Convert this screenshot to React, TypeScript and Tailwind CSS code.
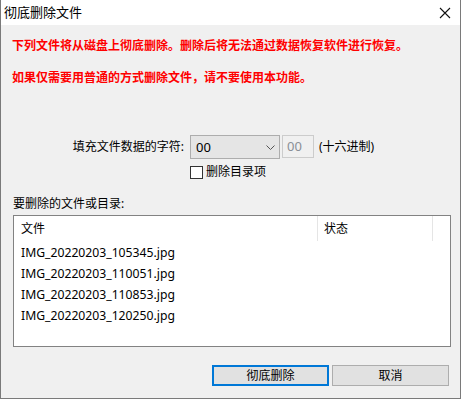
import React from "react";

const font = { fontFamily: '"Noto Sans", "Noto Sans CJK SC", sans-serif' };

export default function App() {
  const files = [
    "IMG_20220203_105345.jpg",
    "IMG_20220203_110051.jpg",
    "IMG_20220203_110853.jpg",
    "IMG_20220203_120250.jpg",
  ];
  return (
    <div
      className="w-[461px] h-[399px] flex flex-col bg-[#f0f0f0] border-x border-b border-[#7a7a7a] text-[12px] text-black overflow-hidden"
      style={font}
    >
      <div className="h-[25px] shrink-0 bg-white flex items-center justify-between pl-[3px] pr-[9px]">
        <span className="text-[13px] leading-none">彻底删除文件</span>
        <svg width="12" height="12" viewBox="0 0 12 12" className="mt-[1px]">
          <path d="M1 1 L11 11 M11 1 L1 11" stroke="#111" strokeWidth="1.1" />
        </svg>
      </div>
      <div className="flex flex-col px-[11px]">
        <div className="mt-[13px] font-bold text-[#ff0000] leading-[16px]">
          下列文件将从磁盘上彻底删除。删除后将无法通过数据恢复软件进行恢复。
        </div>
        <div className="mt-[16px] font-bold text-[#ff0000] leading-[16px]">
          如果仅需要用普通的方式删除文件，请不要使用本功能。
        </div>
        <div className="mt-[49px] flex items-center h-[24px]">
          <div className="w-[178px] text-right pr-[6px] leading-none">填充文件数据的字符:</div>
          <div className="w-[90px] h-[24px] bg-[#e5e5e5] border border-[#adadad] flex items-center justify-between pl-[5px] pr-[4px]">
            <span className="text-[13px] leading-none">00</span>
            <svg width="9" height="5" viewBox="0 0 9 5">
              <path d="M0.5 0.5 L4.5 4.5 L8.5 0.5" stroke="#555" fill="none" strokeWidth="1" />
            </svg>
          </div>
          <div className="ml-[2px] w-[32px] h-[23px] self-start border border-[#cccccc] flex items-center pl-[4px]">
            <span className="text-[13px] leading-none text-[#8a8f96]">00</span>
          </div>
          <span className="ml-[5px] leading-none">(十六进制)</span>
        </div>
        <div className="mt-[6px] ml-[178px] flex items-center h-[14px]">
          <div className="w-[13px] h-[13px] border border-[#333] bg-white" />
          <span className="ml-[3px] leading-none">删除目录项</span>
        </div>
        <div className="mt-[17px] leading-[16px] ml-[1px]">要删除的文件或目录:</div>
        <div className="mt-[3px] ml-[1px] w-[438px] h-[132px] bg-white border border-[#828282] flex flex-col">
          <div className="h-[25px] flex items-stretch">
            <div className="w-[304px] border-r border-[#e5e5e5] flex items-center pl-[7px] leading-none">文件</div>
            <div className="w-[115px] border-r border-[#e5e5e5] flex items-center pl-[6px] leading-none">状态</div>
          </div>
          <div className="flex flex-col mt-[2px]">
            {files.map((f) => (
              <div key={f} className="h-[21px] flex items-center pl-[7px] text-[12.2px] leading-none">
                {f}
              </div>
            ))}
          </div>
        </div>
        <div className="mt-[18px] flex justify-end gap-[3px]">
          <button className="w-[117px] h-[21px] bg-[#e1e1e1] border-2 border-[#0078d7] flex items-center justify-center leading-none">
            彻底删除
          </button>
          <button className="w-[117px] h-[21px] bg-[#e1e1e1] border border-[#adadad] flex items-center justify-center leading-none">
            取消
          </button>
        </div>
      </div>
    </div>
  );
}
